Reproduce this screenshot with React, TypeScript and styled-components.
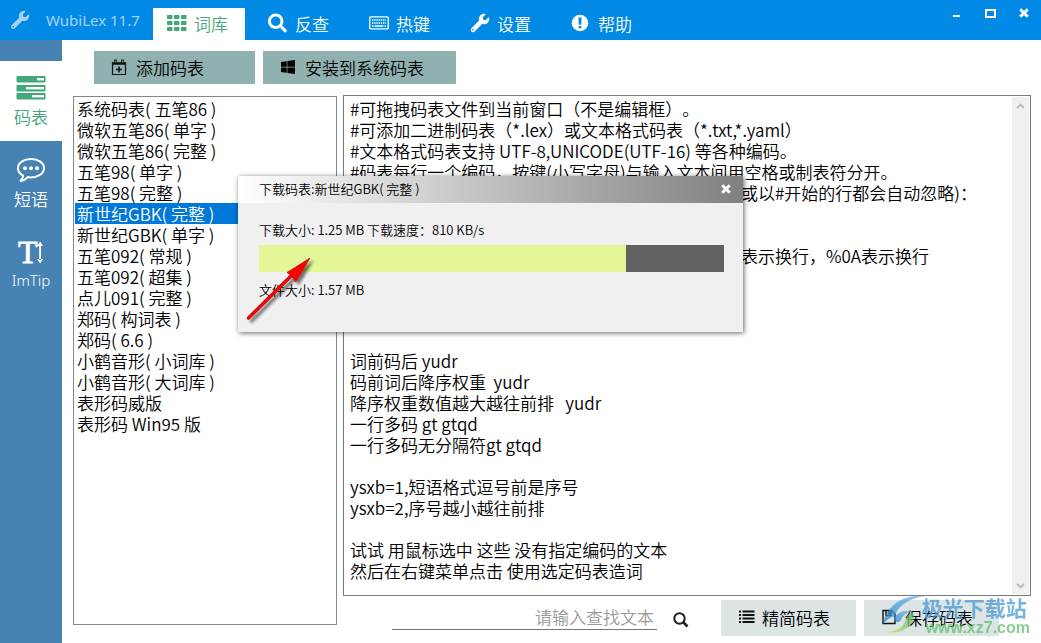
import React, { useState } from 'react';
import styled, { createGlobalStyle } from 'styled-components';
import { FaWrench, FaWindows, FaSearch } from 'react-icons/fa';

const GlobalStyle = createGlobalStyle`
  *, *::before, *::after { box-sizing: border-box; }
  body {
    margin: 0;
    background: #fff;
    color: #000;
    font-family: "Noto Sans CJK SC", "Noto Sans", sans-serif;
    font-size: 17px;
    line-height: 21px;
    font-weight: 350;
    text-spacing-trim: space-all;
  }
  button, input, textarea { font: inherit; color: inherit; }
  button { border: 0; padding: 0; background: none; cursor: pointer; }
  svg { display: block; flex: none; }
`;

const Page = styled.div`
  position: relative;
  display: flex;
  flex-direction: column;
  min-height: 100vh;
`;

const TitleBar = styled.header`
  display: flex;
  align-items: flex-end;
  height: 40px;
  background: #008ae6;
  color: #fff;
`;

const Brand = styled.div`
  display: flex;
  align-items: center;
  align-self: stretch;
  gap: 17px;
  width: 153px;
  padding-left: 11px;
  color: #a6d2f6;
  font-family: "Noto Sans", "Open Sans", sans-serif;
  font-weight: 400;
  font-size: 15px;
  white-space: nowrap;
`;

const Tabs = styled.nav`
  display: flex;
  flex: 1;
  gap: 9px;
`;

const Tab = styled.button<{ $active?: boolean }>`
  display: flex;
  align-items: center;
  gap: 7px;
  width: 92px;
  height: 32px;
  padding: 0 0 2px 14px;
  background: ${p => (p.$active ? '#fff' : 'transparent')};
  color: ${p => (p.$active ? '#43a877' : '#fff')};
  white-space: nowrap;
`;

const WindowControls = styled.div`
  display: flex;
  align-self: flex-start;
  padding: 3px 7px 0 0;
`;

const WindowButton = styled.button`
  display: grid;
  place-items: center;
  width: 20px;
  height: 20px;
  margin-left: 14px;
`;

const Body = styled.div`
  display: flex;
  flex: 1;
`;

const Sidebar = styled.nav`
  display: flex;
  flex-direction: column;
  gap: 2px;
  width: 62px;
  padding-top: 21px;
  background: #4682b4;
`;

const SideItem = styled.button<{ $active?: boolean }>`
  display: flex;
  flex-direction: column;
  align-items: center;
  gap: 5px;
  height: 80px;
  padding-top: 15px;
  background: ${p => (p.$active ? '#fff' : 'transparent')};
  color: ${p => (p.$active ? '#43a877' : '#fff')};
`;

const LatinLabel = styled.span`
  font-family: "Noto Sans", "Open Sans", sans-serif;
  font-size: 15px;
`;

const Main = styled.main`
  display: flex;
  flex: 1;
  flex-direction: column;
  min-width: 0;
  padding: 11px 10px 0 11px;
`;

const Toolbar = styled.div`
  display: flex;
  gap: 8px;
  padding: 0 0 11px 21px;
`;

const ToolButton = styled.button<{ $wide?: boolean }>`
  display: flex;
  align-items: center;
  gap: 9px;
  width: ${p => (p.$wide ? 193 : 161)}px;
  height: 33px;
  padding: 0 0 1px 17px;
  background: #8fb1af;
  white-space: nowrap;
`;

const Columns = styled.div`
  display: grid;
  flex: 1;
  grid-template-columns: 264fr 688fr;
  gap: 6px;
`;

const TableList = styled.ul`
  min-width: 0;
  margin: 1px 0 18px;
  padding: 1px;
  border: 1px solid #828790;
  list-style: none;
`;

const TableOption = styled.li<{ $selected?: boolean }>`
  padding: 0 2px;
  background: ${p => (p.$selected ? '#0078d7' : 'transparent')};
  color: ${p => (p.$selected ? '#fff' : 'inherit')};
  white-space: pre;
  cursor: default;
`;

const EditorColumn = styled.section`
  display: flex;
  flex-direction: column;
  min-width: 0;
`;

const EditorFrame = styled.div`
  display: flex;
  flex: 1;
  border: 1px solid #7a7a7a;
`;

const Editor = styled.textarea`
  flex: 1;
  min-width: 0;
  padding: 2px 6px;
  border: 0;
  outline: 0;
  background: transparent;
  resize: none;
  overflow: hidden;
`;

const ScrollTrack = styled.div`
  display: flex;
  flex-direction: column;
  justify-content: space-between;
  width: 17px;
  margin: 1px 1px 1px 0;
  background: #f0f0f0;
`;

const ScrollButton = styled.button`
  display: grid;
  place-items: center;
  height: 17px;
`;

const Footer = styled.form`
  display: flex;
  justify-content: flex-end;
  gap: 8px;
  padding: 4px 32px 7px 49px;
`;

const SearchInput = styled.input`
  flex: 1;
  min-width: 0;
  height: 30px;
  padding: 5px 3px 2px;
  border: 0;
  border-bottom: 1px solid #767676;
  outline: 0;
  background: transparent;
  text-align: right;
  &::placeholder { color: #999; opacity: 1; }
`;

const SearchButton = styled.button`
  display: grid;
  place-items: center;
  width: 32px;
  height: 36px;
  margin-right: 16px;
  padding-top: 4px;
`;

const FooterButton = styled.button`
  display: flex;
  align-items: center;
  gap: 7px;
  width: 135px;
  height: 36px;
  padding: 0 0 2px 17px;
  background: #dce4e4;
  white-space: nowrap;
`;

const Dialog = styled.div`
  position: absolute;
  left: 238px;
  top: 176px;
  width: 505px;
  background: #f0f0f0;
  box-shadow: 1px 1px 5px rgba(0, 0, 0, 0.6);
  font-size: 13px;
`;

const DialogTitle = styled.div`
  display: flex;
  align-items: center;
  justify-content: space-between;
  height: 27px;
  padding: 0 12px 2px 21px;
  background: linear-gradient(90deg, #fff, #c0c0c0 50%, #808080);
  white-space: pre;
`;

const DialogBody = styled.div`
  display: flex;
  flex-direction: column;
  gap: 5px;
  height: 129px;
  padding: 16px 19px 0 21px;
  white-space: pre;
`;

const Track = styled.div`
  height: 27px;
  background: #646162;
`;

const Fill = styled.div`
  height: 100%;
  background: #e4f796;
`;

const FileSize = styled.div`
  padding-top: 2px;
`;

const Pointer = styled.svg`
  position: absolute;
  left: 0;
  top: 74px;
  pointer-events: none;
`;

const Watermark = styled.div`
  position: absolute;
  right: 11px;
  bottom: 6px;
  display: flex;
  align-items: flex-start;
  opacity: 0.75;
  pointer-events: none;
`;

const WatermarkText = styled.div`
  margin-left: -4px;
  color: #4a9ad4;
  font-size: 21px;
  line-height: 24px;
  font-weight: 700;
`;

const WatermarkUrl = styled.div`
  color: #5cbf6c;
  font-family: "Liberation Sans", sans-serif;
  font-size: 16px;
  line-height: 18px;
  font-weight: 700;
`;

const GridIcon = () => (
  <svg width="20" height="16" viewBox="0 0 20 16" fill="currentColor">
    {[0, 6, 12].map(y => [0, 7, 14].map(x => (
      <rect key={`${x}-${y}`} x={x} y={y} width="5.500" height="4" rx=".7" />
    )))}
  </svg>
);

const KeyboardIcon = () => (
  <svg width="20" height="14" viewBox="0 0 20 14" fill="none" stroke="currentColor">
    <rect x=".7" y=".9" width="18.6" height="12" rx="1" strokeWidth="1.4" />
    <path d="M3 4h14M3 7h14" strokeWidth="1.5" strokeDasharray="1.4 .8" />
    <path d="M3 10h1.5M5.5 10h9M15.5 10h1.5" strokeWidth="1.5" />
  </svg>
);

const AlertIcon = () => (
  <svg width="20" height="18" viewBox="0 0 20 18">
    <circle cx="9" cy="9" r="8.3" fill="currentColor" />
    <path d="M7.400 3.500h3.200l-.4 7.200h-2.400z" fill="#008ae6" />
    <rect x="7.600" y="11.900" width="2.800" height="2.400" rx=".4" fill="#008ae6" />
  </svg>
);

const TasksIcon = () => (
  <svg width="30" height="25" viewBox="0 0 30 25">
    {[[0, 21, 7], [9, 10, 18], [17, 16, 12]].map(([y, x, w]) => (
      <g key={y}>
        <rect x=".5" y={y} width="29" height="6.4" rx=".8" fill="currentColor" />
        <rect x={x} y={y + 2} width={w} height="2.4" fill="#fff" />
      </g>
    ))}
  </svg>
);

const ChatIcon = () => (
  <svg width="30" height="25" viewBox="0 1 30 25">
    <path
      d="M15 2C7.7 2 2 6 2 11.2c0 3.2 2 5.8 5.2 7.5-.3 2.2-1.3 3.8-2.7 5.2 3-.4 5.500-1.700 7.400-3.800 1 .2 2 .3 3.100.3 7.300 0 13-4 13-9.200S22.300 2 15 2z"
      fill="none" stroke="currentColor" strokeWidth="2" strokeLinejoin="round"
    />
    <g fill="currentColor">
      <circle cx="9" cy="11.200" r="2" />
      <circle cx="15" cy="11.200" r="2" />
      <circle cx="21" cy="11.200" r="2" />
    </g>
  </svg>
);

const TextHeightIcon = () => (
  <svg width="28" height="25" viewBox="0 0 28 25" fill="currentColor" overflow="visible">
    <text x="1" y="23" fontFamily="Liberation Serif, serif" fontSize="32" fontWeight="400" stroke="currentColor" strokeWidth=".8">T</text>
    <path d="M22.200 5h1.800v15h-1.800z M23.100 1.500l3 4.500h-6z M23.100 23.500l3-4.500h-6z" />
  </svg>
);

const CalendarIcon = () => (
  <svg width="16" height="17" viewBox="0 0 16 17" fill="none" stroke="#111">
    <path d="M1.500 3.500v12h13v-12" strokeWidth="1.200" />
    <path d="M1 4.500h14" strokeWidth="2.500" />
    <path d="M4.500 .5v4M11.500 .5v4" strokeWidth="2.600" />
    <path d="M4.500 1.500v2M11.500 1.500v2" stroke="#8fb1af" strokeWidth=".8" />
    <path d="M8 7.500v6M5 10.500h6" strokeWidth="1.600" />
  </svg>
);

const ListIcon = () => (
  <svg width="17" height="14" viewBox="0 0 17 14" stroke="#111" strokeWidth="2">
    {[1.5, 5, 8.5, 12].map(y => <path key={y} d={`M1 ${y}h2M4.500 ${y}h12`} />)}
  </svg>
);

const SaveIcon = () => (
  <svg width="17" height="16" viewBox="0 0 17 16" fill="none" stroke="#111" strokeWidth="1.400">
    <path d="M2 1.500h8.500l3.500 3.500v9.500h-12z" />
    <path d="M5 1.500v5h5v-5" />
    <path d="M8.200 2v3.500" strokeWidth="1.800" />
  </svg>
);

const FindIcon = () => (
  <svg width="16" height="16" viewBox="0 0 16 16" fill="none" stroke="#222">
    <circle cx="6.500" cy="6.500" r="5.200" strokeWidth="2" />
    <path d="M10.500 10.500l4 4" strokeWidth="2.600" />
  </svg>
);

const CloseIcon = () => (
  <svg width="10" height="10" viewBox="0 0 10 10" stroke="#fff" strokeWidth="3">
    <path d="M1.200 1.200l7.600 7.600M8.800 1.200l-7.600 7.600" />
  </svg>
);

const Chevron = ({ down }: { down?: boolean }) => (
  <svg width="9" height="6" viewBox="0 0 9 6" fill="none" stroke="#bbb" strokeWidth="1.800">
    <path d={down ? 'M1 1l3.500 3.500L8 1' : 'M1 5l3.500-3.500L8 5'} />
  </svg>
);

const SwooshLogo = () => (
  <svg width="44" height="40" viewBox="0 0 44 40">
    <defs>
      <linearGradient id="sky" x1="0" y1="1" x2="1" y2="0">
        <stop offset="0" stopColor="#2f86cc" />
        <stop offset="1" stopColor="#67b9ea" />
      </linearGradient>
      <linearGradient id="leaf" x1="0" y1="1" x2="1" y2="0">
        <stop offset="0" stopColor="#d6dc5a" />
        <stop offset="1" stopColor="#4fb877" />
      </linearGradient>
    </defs>
    <path d="M1 29C4 12 20-1 43 1 27 3 15 12 13 21 9 22 4 25 1 29z" fill="url(#sky)" />
    <path d="M12 24c3-7 11-10 19-7-7 0-10 3-12 8-2 3-6 3-7-1z" fill="url(#sky)" />
    <path d="M3 37c12 0 19-5 21-13 1-4 4-6 7-6 4 9-9 23-28 19z" fill="url(#leaf)" />
  </svg>
);

const tables = [
  '系统码表( 五笔86 )', '微软五笔86( 单字 )', '微软五笔86( 完整 )', '五笔98( 单字 )',
  '五笔98( 完整 )', '新世纪GBK( 完整 )', '新世纪GBK( 单字 )', '五笔092( 常规 )',
  '五笔092( 超集 )', '点儿091( 完整 )', '郑码( 构词表 )', '郑码( 6.6 )',
  '小鹤音形( 小词库 )', '小鹤音形( 大词库 )', '表形码威版', '表形码 Win95 版',
];

const indent = '\u3000'.repeat(23);

const initialText = [
  '#可拖拽码表文件到当前窗口（不是编辑框）。',
  '#可添加二进制码表（*.lex）或文本格式码表（*.txt,*.yaml）',
  '#文本格式码表支持 UTF-8,UNICODE(UTF-16) 等各种编码。',
  '#码表每行一个编码，按键(小写字母)与输入文本间用空格或制表符分开。',
  `${indent}或以#开始的行都会自动忽略)：`,
  '', '',
  `${indent}表示换行，%0A表示换行`,
  '', '', '', '',
  '词前码后 yudr',
  '码前词后降序权重  yudr',
  '降序权重数值越大越往前排   yudr',
  '一行多码 gt gtqd',
  '一行多码无分隔符gt gtqd',
  '',
  'ysxb=1,短语格式逗号前是序号',
  'ysxb=2,序号越小越往前排',
  '',
  '试试 用鼠标选中 这些 没有指定编码的文本',
  '然后在右键菜单点击 使用选定码表造词',
].join('\n');

export default function App() {
  const [selected, setSelected] = useState(5);
  const [text, setText] = useState(initialText);
  const progress = 79;

  return (
    <Page>
      <GlobalStyle />
      <TitleBar>
        <Brand><FaWrench size={18} />WubiLex 11.7</Brand>
        <Tabs>
          <Tab $active><GridIcon />词库</Tab>
          <Tab><FaSearch size={20} viewBox="0 0 540 512" />反查</Tab>
          <Tab><KeyboardIcon />热键</Tab>
          <Tab><FaWrench size={20} viewBox="-20 -20 552 552" />设置</Tab>
          <Tab><AlertIcon />帮助</Tab>
        </Tabs>
        <WindowControls>
          <WindowButton aria-label="最小化">
            <svg width="7" height="8"><rect y="6" width="7" height="2" fill="#fff" /></svg>
          </WindowButton>
          <WindowButton aria-label="最大化">
            <svg width="11" height="9"><rect x="1" y="1" width="9" height="7" fill="none" stroke="#fff" strokeWidth="2" /></svg>
          </WindowButton>
          <WindowButton aria-label="关闭"><CloseIcon /></WindowButton>
        </WindowControls>
      </TitleBar>

      <Body>
        <Sidebar>
          <SideItem $active><TasksIcon />码表</SideItem>
          <SideItem><ChatIcon />短语</SideItem>
          <SideItem><TextHeightIcon /><LatinLabel>ImTip</LatinLabel></SideItem>
        </Sidebar>

        <Main>
          <Toolbar>
            <ToolButton><CalendarIcon />添加码表</ToolButton>
            <ToolButton $wide><FaWindows size={16} />安装到系统码表</ToolButton>
          </Toolbar>
          <Columns>
            <TableList role="listbox" aria-label="码表">
              {tables.map((name, i) => (
                <TableOption
                  key={name}
                  role="option"
                  aria-selected={i === selected}
                  $selected={i === selected}
                  onClick={() => setSelected(i)}
                >
                  {name}
                </TableOption>
              ))}
            </TableList>
            <EditorColumn>
              <EditorFrame>
                <Editor
                  aria-label="码表内容"
                  spellCheck={false}
                  value={text}
                  onChange={e => setText(e.target.value)}
                />
                <ScrollTrack>
                  <ScrollButton aria-label="向上滚动"><Chevron /></ScrollButton>
                  <ScrollButton aria-label="向下滚动"><Chevron down /></ScrollButton>
                </ScrollTrack>
              </EditorFrame>
              <Footer onSubmit={e => e.preventDefault()}>
                <SearchInput aria-label="查找文本" placeholder="请输入查找文本" />
                <SearchButton aria-label="查找"><FindIcon /></SearchButton>
                <FooterButton type="button"><ListIcon />精简码表</FooterButton>
                <FooterButton type="button"><SaveIcon />保存码表</FooterButton>
              </Footer>
            </EditorColumn>
          </Columns>
        </Main>
      </Body>

      <Dialog role="dialog" aria-labelledby="dialog-title">
        <DialogTitle>
          <span id="dialog-title">下载码表:新世纪GBK( 完整 )</span>
          <button aria-label="关闭下载窗口"><CloseIcon /></button>
        </DialogTitle>
        <DialogBody>
          <div>下载大小: 1.25 MB 下载速度：810 KB/s</div>
          <Track role="progressbar" aria-valuenow={progress} aria-label="下载进度">
            <Fill style={{ width: `${progress}%` }} />
          </Track>
          <FileSize>文件大小: 1.57 MB</FileSize>
        </DialogBody>
        <Pointer width="90" height="80" viewBox="0 0 90 80">
          <defs>
            <filter id="pointer-shadow" x="-20%" y="-20%" width="150%" height="150%">
              <feDropShadow dx="3" dy="3" stdDeviation="1.800" floodColor="#000" floodOpacity=".55" />
            </filter>
          </defs>
          <g filter="url(#pointer-shadow)">
            <path d="M10.500 68L53 26" stroke="#b01010" strokeWidth="3.400" strokeLinecap="round" />
            <path d="M10.500 68L53 26" stroke="#f00" strokeWidth="2.200" strokeLinecap="round" />
            <path d="M72 8L49 22.500 54 26 57.500 32z" fill="#f00" stroke="#b01010" strokeWidth=".7" />
          </g>
        </Pointer>
      </Dialog>

      <Watermark>
        <SwooshLogo />
        <div>
          <WatermarkText>极光下载站</WatermarkText>
          <WatermarkUrl>www.xz7.com</WatermarkUrl>
        </div>
      </Watermark>
    </Page>
  );
}
